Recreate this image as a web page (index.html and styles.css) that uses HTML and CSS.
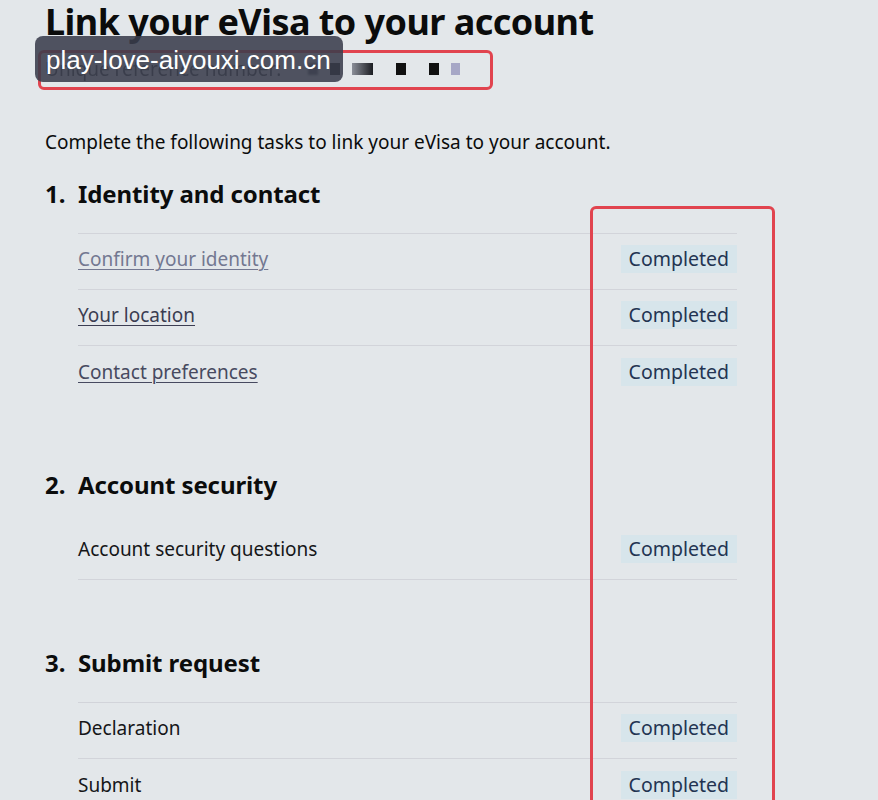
FILE: index.html
```html
<!DOCTYPE html>
<html lang="en">
<head>
<meta charset="utf-8">
<title>Link your eVisa to your account</title>
<link rel="stylesheet" href="styles.css">
</head>
<body>
<main class="page">
  <h1 class="title">Link your eVisa to your account</h1>
  <p class="ref">
    <span class="ref-label">Unique reference number:</span>
    <span class="ref-code">
      <i class="blk blk-soft"></i><i class="blk"></i><i class="blk blk-wide"></i><i class="blk blk-gap"></i><i class="blk blk-gap"></i><i class="blk blk-light"></i>
    </span>
  </p>

  <p class="intro">Complete the following tasks to link your eVisa to your account.</p>

  <section class="group">
    <h2 class="group-title"><span class="num">1.</span>Identity and contact</h2>
    <ul class="tasks tasks-top">
      <li class="task line"><a class="task-link faded" href="#">Confirm your identity</a><span class="tag">Completed</span></li>
      <li class="task line"><a class="task-link" href="#">Your location</a><span class="tag">Completed</span></li>
      <li class="task"><a class="task-link mid" href="#">Contact preferences</a><span class="tag">Completed</span></li>
    </ul>
  </section>

  <section class="group">
    <h2 class="group-title"><span class="num">2.</span>Account security</h2>
    <ul class="tasks">
      <li class="task line"><span class="task-name">Account security questions</span><span class="tag">Completed</span></li>
    </ul>
  </section>

  <section class="group">
    <h2 class="group-title"><span class="num">3.</span>Submit request</h2>
    <ul class="tasks tasks-top">
      <li class="task line"><span class="task-name">Declaration</span><span class="tag">Completed</span></li>
      <li class="task"><span class="task-name">Submit</span><span class="tag">Completed</span></li>
    </ul>
  </section>
</main>

<div class="mark-ref"></div>
<div class="mark-status"></div>
<div class="watermark">play-love-aiyouxi.com.cn</div>
</body>
</html>
```

FILE: styles.css
```css
html, body {
  margin: 0;
  padding: 0;
  background: #e3e7ea;
}

body {
  font-family: "Noto Sans", "Open Sans", sans-serif;
  color: #0b0c0c;
  position: relative;
  height: 800px;
  overflow: hidden;
}

.page {
  padding: 0 0 0 45px;
  width: 692px;
}

.title {
  margin: 0;
  font-size: 36px;
  line-height: 44px;
  font-weight: 700;
  letter-spacing: -0.55px;
}

.ref {
  margin: 12px 0 0 0;
  height: 26px;
  display: flex;
  align-items: center;
  gap: 27px;
  font-size: 19px;
  color: #3a3d45;
}

.ref-label {
  filter: blur(0.6px);
}

.ref-code {
  display: flex;
  align-items: center;
  gap: 12px;
}

.blk {
  display: block;
  width: 10px;
  height: 12px;
  background: #111;
}

.blk-soft {
  background: #5a5f6c;
  filter: blur(1px);
}

.blk-wide {
  width: 21px;
  background: linear-gradient(90deg, #8b8f99, #1b1d22);
}

.blk-gap {
  margin-left: 11px;
}

.blk-light {
  width: 9px;
  background: #a6a7c6;
}

.intro {
  margin: 47px 0 0 0;
  font-size: 19px;
  line-height: 26px;
}

.group + .group {
  margin-top: 68px;
}

.group-title {
  margin: 24px 0 0 0;
  font-size: 24px;
  line-height: 30px;
  font-weight: 700;
  letter-spacing: -0.1px;
}

.num {
  display: inline-block;
  width: 33px;
}

.tasks {
  list-style: none;
  margin: 24px 0 0 33px;
  padding: 0;
  width: 659px;
}

.tasks-top {
  border-top: 1px solid #d2d4da;
}

.task {
  height: 56px;
  padding-bottom: 5px;
  display: flex;
  align-items: center;
  justify-content: space-between;
  box-sizing: border-box;
  font-size: 19px;
}

.task.line {
  border-bottom: 1px solid #d2d4da;
}

.task-link {
  color: #3b3d52;
  text-decoration: underline;
  text-decoration-thickness: 1px;
  text-underline-offset: 3px;
}

.task-link.faded {
  color: #737891;
}

.task-link.mid {
  color: #474a60;
}

.task-name {
  color: #151618;
}

.tag {
  padding: 3px 8px;
  background: #d7e5eb;
  color: #233452;
  font-size: 19.5px;
  line-height: 22px;
}

/* annotation overlays */
.mark-ref {
  position: absolute;
  left: 38px;
  top: 50px;
  width: 449px;
  height: 34px;
  border: 3px solid #e1444f;
  border-radius: 6px;
}

.mark-status {
  position: absolute;
  left: 590px;
  top: 206px;
  width: 179px;
  height: 640px;
  border: 3px solid #e1444f;
  border-radius: 6px;
}

.watermark {
  position: absolute;
  left: 35px;
  top: 36px;
  width: 308px;
  height: 46px;
  box-sizing: border-box;
  padding: 9px 0 0 11px;
  border-radius: 8px;
  background: rgba(58, 62, 76, 0.88);
  color: #ffffff;
  font-family: "Liberation Sans", Arial, sans-serif;
  font-size: 26px;
  line-height: 30px;
  white-space: nowrap;
}
```
